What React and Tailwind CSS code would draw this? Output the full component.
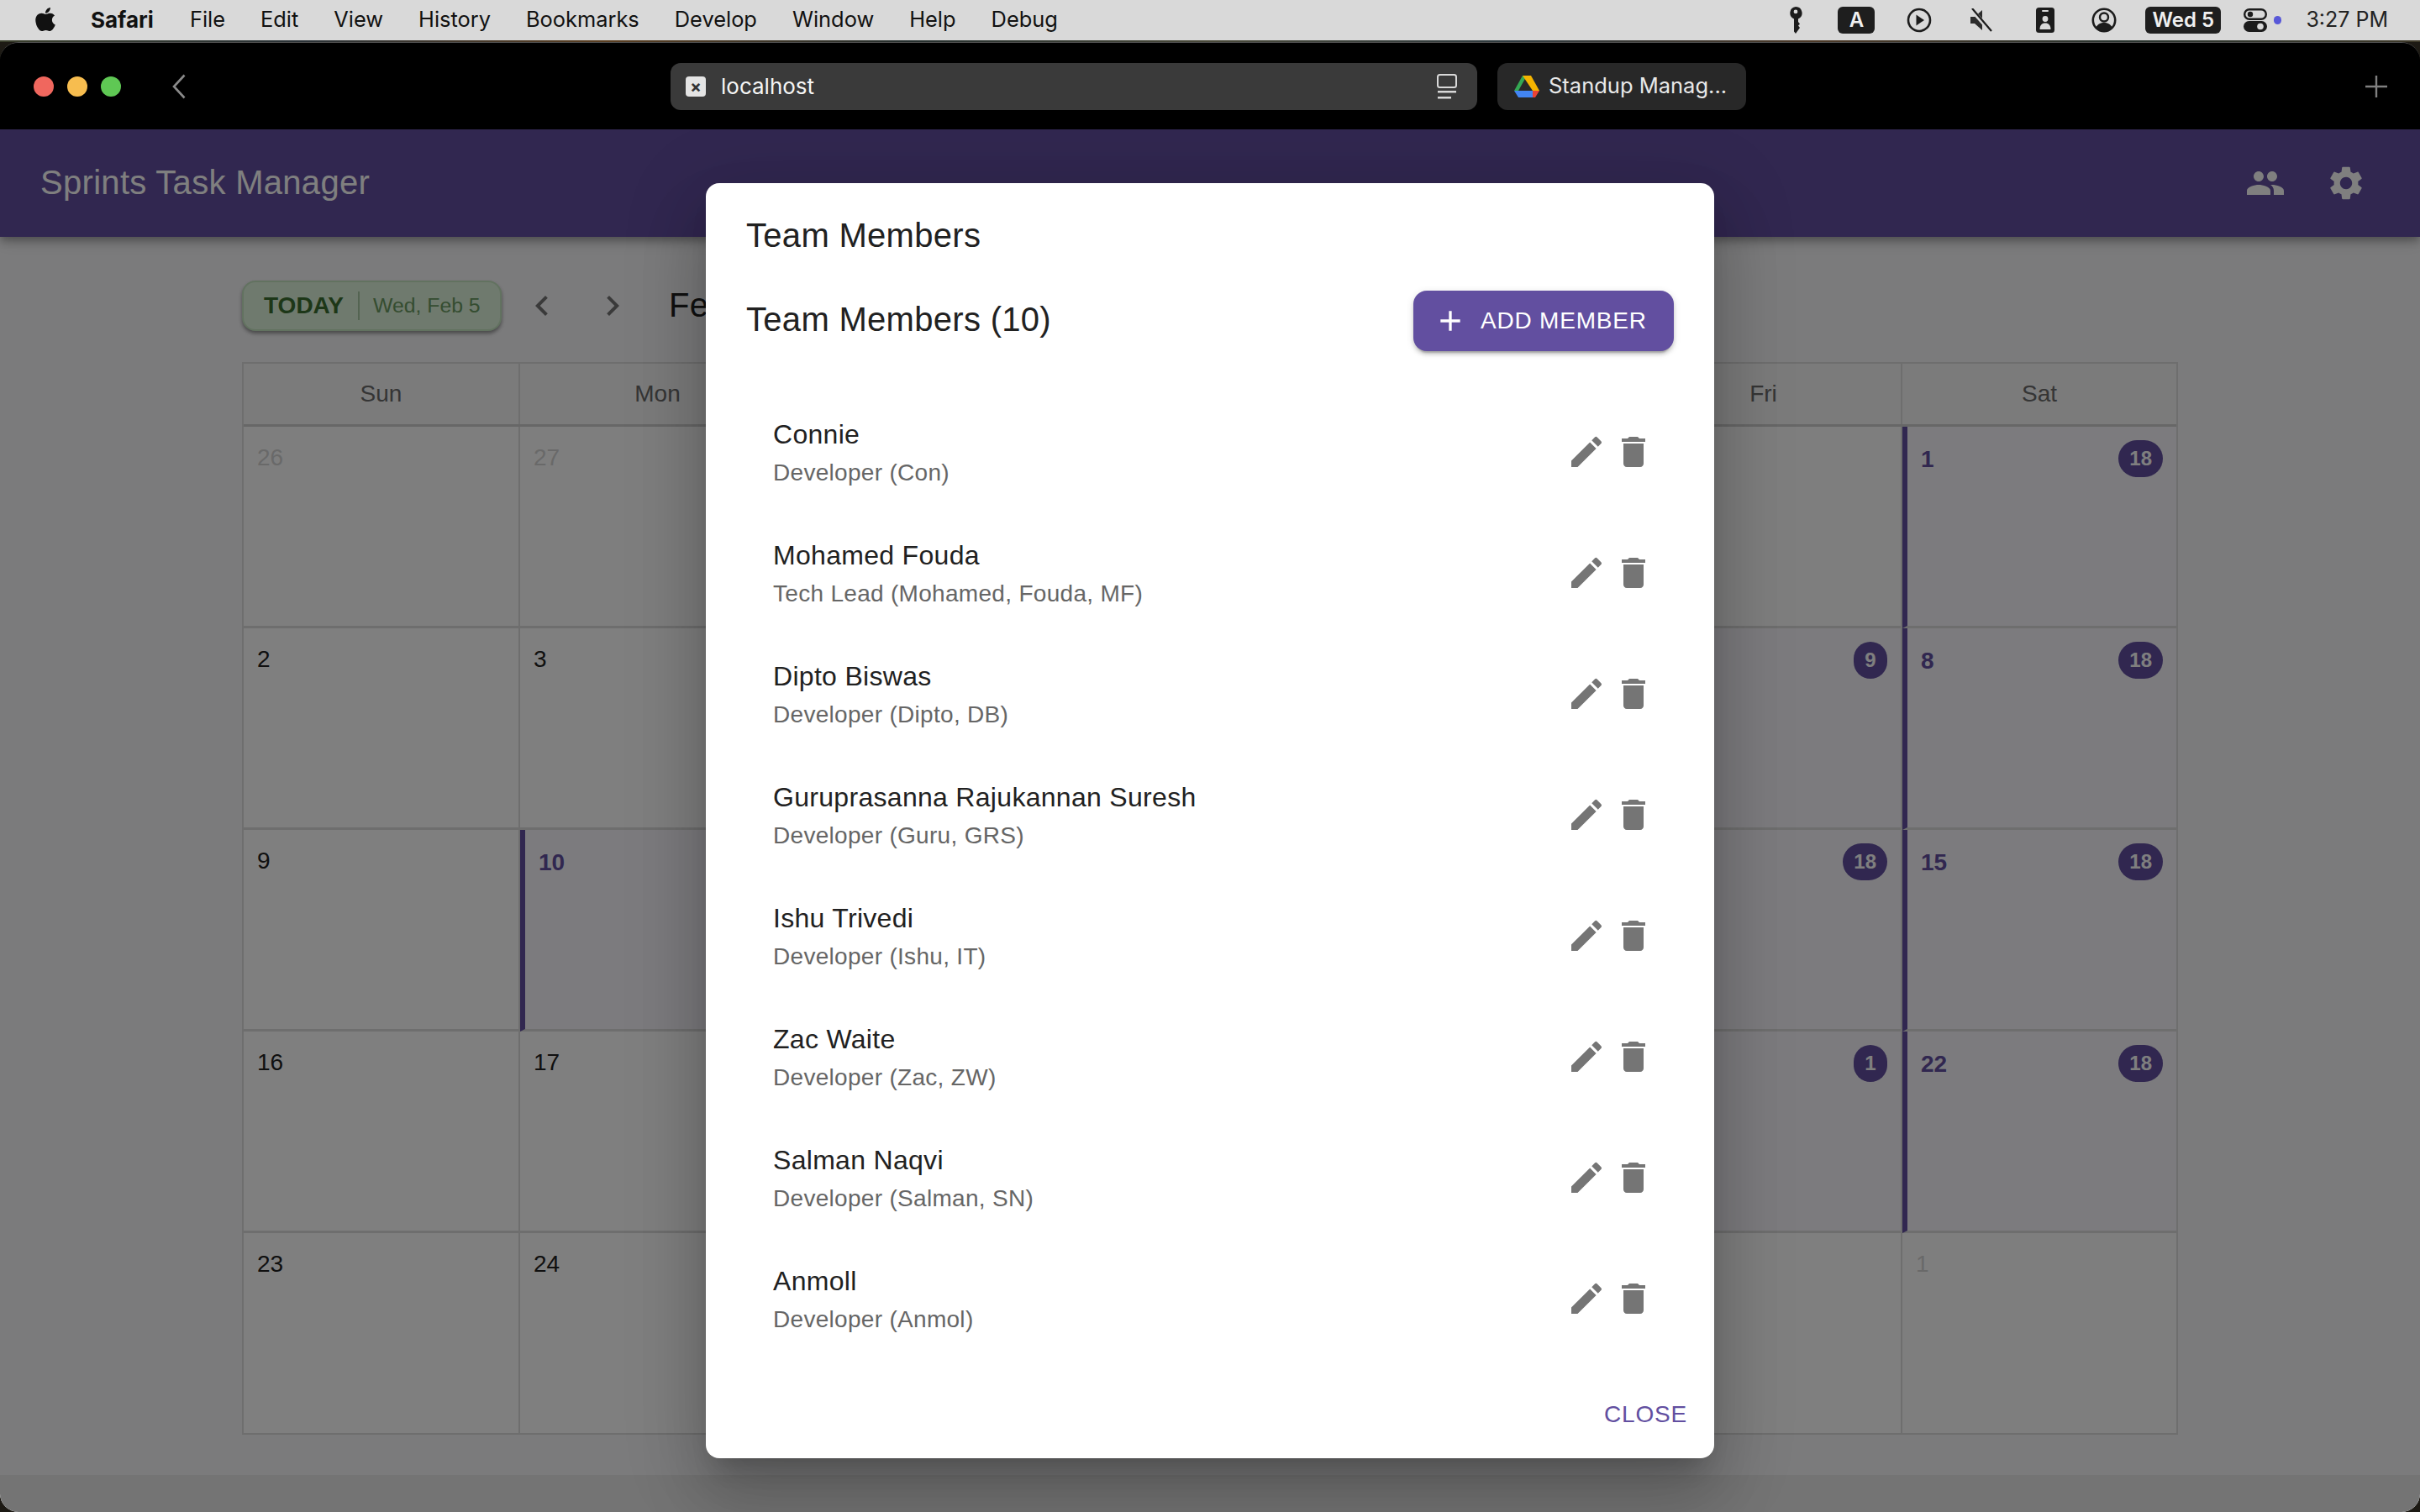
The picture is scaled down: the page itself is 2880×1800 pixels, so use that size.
import React from "react";
import { FaApple } from "react-icons/fa";

const ICON = {
  edit: "M3 17.25V21h3.75L17.81 9.94l-3.75-3.75L3 17.25zM20.71 7.04c.39-.39.39-1.02 0-1.41l-2.34-2.34a.9959.9959 0 0 0-1.41 0l-1.83 1.83 3.75 3.75 1.83-1.83z",
  del: "M6 19c0 1.1.9 2 2 2h8c1.1 0 2-.9 2-2V7H6v12zM19 4h-3.5l-1-1h-5l-1 1H5v2h14V4z",
  add: "M19 13h-6v6h-2v-6H5v-2h6V5h2v6h6v2z",
  people: "M16 11c1.66 0 2.99-1.34 2.99-3S17.66 5 16 5c-1.66 0-3 1.34-3 3s1.34 3 3 3zm-8 0c1.66 0 2.99-1.34 2.99-3S9.66 5 8 5C6.34 5 5 6.34 5 8s1.34 3 3 3zm0 2c-2.33 0-7 1.17-7 3.5V19h14v-2.5c0-2.33-4.67-3.5-7-3.5zm8 0c-.29 0-.62.02-.97.05 1.16.84 1.97 1.97 1.97 3.45V19h6v-2.5c0-2.33-4.67-3.5-7-3.5z",
  gear: "M19.14 12.94c.04-.3.06-.61.06-.94 0-.32-.02-.64-.07-.94l2.03-1.58c.18-.14.23-.41.12-.61l-1.92-3.32c-.12-.22-.37-.29-.59-.22l-2.39.96c-.5-.38-1.03-.7-1.62-.94l-.36-2.54c-.04-.24-.24-.41-.48-.41h-3.84c-.24 0-.43.17-.47.41l-.36 2.54c-.59.24-1.13.57-1.62.94l-2.39-.96c-.22-.08-.47 0-.59.22L2.74 8.87c-.12.21-.08.47.12.61l2.03 1.58c-.05.3-.09.63-.09.94s.02.64.07.94l-2.03 1.58c-.18.14-.23.41-.12.61l1.92 3.32c.12.22.37.29.59.22l2.39-.96c.5.38 1.03.7 1.62.94l.36 2.54c.05.24.24.41.48.41h3.84c.24 0 .44-.17.47-.41l.36-2.54c.59-.24 1.13-.56 1.62-.94l2.39.96c.22.08.47 0 .59-.22l1.92-3.32c.12-.22.07-.47-.12-.61l-2.01-1.58zM12 15.6c-1.98 0-3.6-1.62-3.6-3.6s1.62-3.6 3.6-3.6 3.6 1.62 3.6 3.6-1.62 3.6-3.6 3.6z",
  left: "M15.41 7.41 14 6l-6 6 6 6 1.41-1.41L10.83 12z",
  right: "M10 6 8.59 7.41 13.17 12l-4.58 4.59L10 18l6-6z",
};

function Mui({ d, className }) {
  return (
    <svg viewBox="0 0 24 24" className={className} fill="currentColor">
      <path d={d} />
    </svg>
  );
}

const MENU = ["File", "Edit", "View", "History", "Bookmarks", "Develop", "Window", "Help", "Debug"];

function MenuBar() {
  return (
    <div className="h-[48px] shrink-0 bg-[#d9d9d9] flex items-center font-['Inter',sans-serif] text-[25.4px] text-[#111111]">
      <FaApple className="ml-[39px] w-[30px] h-[32px] mb-[3px] text-[#111111]" />
      <span className="ml-[39px] mb-[2px] text-[26px] font-bold">Safari</span>
      <div className="ml-[43px] mb-[2px] flex gap-[42px]">
        {MENU.map((m) => (
          <span key={m}>{m}</span>
        ))}
      </div>
      <div className="ml-auto flex items-center">
        <svg viewBox="0 0 16 32" className="w-[16px] h-[32px]">
          <path fillRule="evenodd" d="M8 0a7.5 7.5 0 0 1 3 14.4V18l2 2.5-2 2 2 2.500-5 7-2-2.500V14.400A7.500 7.500 0 0 1 8 0zm0 3.500a2.400 2.400 0 1 0 0 4.800 2.400 2.400 0 0 0 0-4.800z" fill="#1c1c1c" />
        </svg>
        <div className="ml-[42px] w-[44px] h-[32px] rounded-[6px] bg-[#1e1e1e] text-[#f0f0f0] text-[24px] font-semibold flex items-center justify-center">A</div>
        <svg viewBox="0 0 30 30" className="ml-[38px] w-[30px] h-[30px]">
          <circle cx="15" cy="15" r="13" fill="none" stroke="#1c1c1c" strokeWidth="2.6" />
          <path d="M11.5 8.5 21 15l-9.5 6.5z" fill="#1c1c1c" />
        </svg>
        <svg viewBox="0 0 28 28" className="ml-[44px] w-[28px] h-[28px]">
          <path d="M2 10h5l9-8v24l-9-8H2z" fill="#2c2c2c" />
          <path d="M3 1l23 26" stroke="#d9d9d9" strokeWidth="5" />
          <path d="M4 0l23 27" stroke="#1c1c1c" strokeWidth="2.2" />
        </svg>
        <svg viewBox="0 0 22 30" className="ml-[52px] w-[22px] h-[30px]">
          <rect width="22" height="30" rx="3.5" fill="#1c1c1c" />
          <rect x="7" y="3" width="8" height="2" rx="1" fill="#d9d9d9" />
          <circle cx="11" cy="13.5" r="3.4" fill="#d9d9d9" />
          <path d="M4.5 26c0-5 2.5-7.5 6.5-7.5s6.5 2.5 6.5 7.5z" fill="#d9d9d9" />
        </svg>
        <svg viewBox="0 0 30 30" className="ml-[44px] w-[30px] h-[30px]">
          <circle cx="15" cy="15" r="13.2" fill="none" stroke="#1c1c1c" strokeWidth="2.6" />
          <circle cx="15" cy="11.5" r="5" fill="none" stroke="#1c1c1c" strokeWidth="2.4" />
          <path d="M5.5 23.5c2-4 5.5-5.5 9.5-5.5s7.500 1.500 9.500 5.500C22 26.500 18.500 28 15 28s-7-1.500-9.500-4.500z" fill="#1c1c1c" />
        </svg>
        <div className="ml-[34px] w-[90px] h-[32px] rounded-[6px] bg-[#1e1e1e] text-[#f0f0f0] text-[24px] font-semibold flex items-center justify-center whitespace-nowrap">Wed 5</div>
        <svg viewBox="0 0 28 28" className="ml-[27px] w-[28px] h-[28px]">
          <rect x="1.200" y="1.200" width="25.600" height="11.600" rx="5.800" fill="none" stroke="#1c1c1c" strokeWidth="2.400" />
          <circle cx="8" cy="7" r="3.200" fill="#1c1c1c" />
          <rect y="15" width="28" height="13" rx="6.500" fill="#1c1c1c" />
          <circle cx="20" cy="21.500" r="3.800" fill="#d9d9d9" />
        </svg>
        <div className="ml-[8px] w-[9px] h-[10px] rounded-full bg-[#5858d8]" />
        <span className="ml-[29px] mr-[38px] text-[25px] whitespace-nowrap text-[#222222]">3:27 PM</span>
      </div>
    </div>
  );
}

function DriveLogo() {
  return (
    <svg viewBox="0 0 30 26" className="w-[30px] h-[26px]">
      <polygon points="15,0 10,0 0,18 5,18" fill="#34a853" />
      <polygon points="10,0 15,0 20,0 30,18 22,18" fill="#f5b400" />
      <polygon points="15,9 10,18 20,18" fill="#282828" />
      <polygon points="0,18 10,18 22,18 22,26 5,26" fill="#4285f4" />
      <polygon points="22,18 30,18 25,26 22,26" fill="#ea4335" />
    </svg>
  );
}

function BrowserBar() {
  return (
    <div className="h-[103px] shrink-0 bg-black flex items-center font-['Inter',sans-serif]">
      <div className="ml-[40px] flex gap-[16px]">
        <div className="w-[24px] h-[24px] rounded-full bg-[#f0675e]" />
        <div className="w-[24px] h-[24px] rounded-full bg-[#f7bd4f]" />
        <div className="w-[24px] h-[24px] rounded-full bg-[#5fc854]" />
      </div>
      <svg viewBox="0 0 18 30" className="ml-[60px] w-[18px] h-[30px]">
        <path d="M15.500 1.500 3 15l12.500 13.500" fill="none" stroke="#8a8a8a" strokeWidth="2.600" />
      </svg>
      <div className="ml-[576px] w-[960px] h-[56px] rounded-[12px] bg-[#3a3a3a] flex items-center pl-[18px] pr-[24px]">
        <div className="w-[24px] h-[24px] rounded-[4px] bg-[#e4e4e4] text-[#333333] text-[20px] leading-[24px] font-bold flex items-center justify-center">×</div>
        <span className="ml-[18px] text-[26px] text-[#f5f5f5]">localhost</span>
        <svg viewBox="0 0 24 30" className="ml-auto w-[24px] h-[30px]">
          <rect x="1" y="1" width="22" height="15" rx="2.500" fill="none" stroke="#d8d8d8" strokeWidth="2" />
          <rect x="1" y="20" width="22" height="2.500" fill="#d8d8d8" />
          <rect x="1" y="27" width="16" height="2.500" fill="#d8d8d8" />
        </svg>
      </div>
      <div className="ml-[24px] w-[296px] h-[56px] rounded-[12px] bg-[#282828] flex items-center pl-[20px]">
        <DriveLogo />
        <span className="ml-[11px] text-[25.5px] text-[#e8e8e8] whitespace-nowrap">Standup Manag...</span>
      </div>
      <svg viewBox="0 0 28 28" className="ml-auto mr-[38px] w-[28px] h-[28px]">
        <path d="M14 1v26M1 14h26" stroke="#808080" strokeWidth="2.400" />
      </svg>
    </div>
  );
}

const TINT = {
  "1": "18", "7": "9", "8": "18", "10": "", "14": "18", "15": "18", "21": "1", "22": "18",
};

// Each day: [date, muted, hidden under the dialog]. Cells under the dialog keep their box but show no number.
const WEEKS = [
  [["26", 1], ["27", 1], ["28", 1, 1], ["29", 1, 1], ["30", 1, 1], ["31", 1, 1], ["1"]],
  [["2"], ["3"], ["4", 0, 1], ["5", 0, 1], ["6", 0, 1], ["7", 0, 1], ["8"]],
  [["9"], ["10"], ["11", 0, 1], ["12", 0, 1], ["13", 0, 1], ["14", 0, 1], ["15"]],
  [["16"], ["17"], ["18", 0, 1], ["19", 0, 1], ["20", 0, 1], ["21", 0, 1], ["22"]],
  [["23"], ["24"], ["25", 0, 1], ["26", 0, 1], ["27", 0, 1], ["28", 0, 1], ["1", 1]],
];

function DayCell({ label, muted, hidden, last, bottom }) {
  const tinted = !muted && label in TINT;
  const badge = tinted ? TINT[label] : "";
  const base = `h-[240px] border-[#dcdcdc] ${last ? "" : "border-r-2"} ${bottom ? "border-b-2" : "border-b-[3px]"}`;
  if (tinted) {
    return (
      <div className={`${base} bg-[#f8f7fc] border-l-[6px] border-l-[#624fa0] pl-[16px] pr-[16px] pt-[16px] flex justify-between items-start`}>
        <span className="mt-[1px] h-[44px] flex items-center text-[28px] font-bold text-[#624fa0]">{hidden ? "" : label}</span>
        {badge && (
          <span className="h-[44px] min-w-[40px] px-[13px] rounded-[22px] bg-[#624fa0] text-white text-[24px] font-bold flex items-center justify-center">{badge}</span>
        )}
      </div>
    );
  }
  return (
    <div className={`${base} ${muted ? "bg-[#fdfdfd]" : "bg-white"} px-[16px] pt-[15px]`}>
      <span className={`text-[28px] leading-[44px] ${muted ? "text-[#d2d2d2]" : "text-[#212121]"}`}>{hidden ? "" : label}</span>
    </div>
  );
}

function Calendar() {
  const days = ["Sun", "Mon", "", "", "", "Fri", "Sat"];
  return (
    <div className="flex-1 px-[288px] pt-[52px]">
      <div className="h-[60px] flex items-center">
        <div className="w-[309px] h-[60px] rounded-[16px] bg-[#def4dc] border-2 border-[#c4e4c0] shadow-[0_3px_4px_rgba(0,0,0,0.4)] flex items-center pl-[24px]">
          <span className="text-[28px] font-bold text-[#3a6e30]">TODAY</span>
          <div className="ml-[17px] w-[2px] h-[34px] bg-[#a8c8a4]" />
          <span className="ml-[16px] text-[24.800px] text-[#6a9a62] whitespace-nowrap">Wed, Feb 5</span>
        </div>
        <Mui d={ICON.left} className="ml-[24px] w-[48px] h-[48px] text-[#757575]" />
        <Mui d={ICON.right} className="ml-[36px] w-[48px] h-[48px] text-[#757575]" />
        <span className="ml-[43px] pb-[3px] text-[40px] tracking-[0.3px] text-[#212121] whitespace-nowrap">February 2025</span>
      </div>
      <div className="mt-[37px] w-[2304px] border-l-2 border-t-2 border-r-2 border-[#dcdcdc]">
        <div className="grid grid-cols-[repeat(6,329px)_1fr] h-[75px] border-b-[3px] border-[#cfcfcf] bg-[#f6f6f6]">
          {days.map((d, i) => (
            <div key={i} className={`flex items-center justify-center text-[28px] text-[#6b6b6b] border-[#dcdcdc] ${i < 6 ? "border-r-2" : ""}`}>{d}</div>
          ))}
        </div>
        {WEEKS.map((w, r) => (
          <div key={r} className="grid grid-cols-[repeat(6,329px)_1fr]">
            {w.map(([label, muted, hidden], i) => (
              <DayCell key={i} label={label} muted={!!muted} hidden={!!hidden} last={i === 6} bottom={r === 4} />
            ))}
          </div>
        ))}
      </div>
    </div>
  );
}

const MEMBERS = [
  ["Connie", "Developer (Con)"],
  ["Mohamed Fouda", "Tech Lead (Mohamed, Fouda, MF)"],
  ["Dipto Biswas", "Developer (Dipto, DB)"],
  ["Guruprasanna Rajukannan Suresh", "Developer (Guru, GRS)"],
  ["Ishu Trivedi", "Developer (Ishu, IT)"],
  ["Zac Waite", "Developer (Zac, ZW)"],
  ["Salman Naqvi", "Developer (Salman, SN)"],
  ["Anmoll", "Developer (Anmol)"],
];

function Modal() {
  return (
    <div className="w-[1200px] h-full bg-white rounded-[16px] flex flex-col shadow-[0_22px_30px_-14px_rgba(0,0,0,0.2),0_48px_76px_6px_rgba(0,0,0,0.14),0_18px_92px_16px_rgba(0,0,0,0.12)]">
      <div className="pt-[30px] px-[48px] h-[96px] shrink-0 text-[40px] leading-[64px] tracking-[0.3px] text-[#212121]">Team Members</div>
      <div className="flex-1 overflow-hidden px-[48px]">
        <div className="h-[72px] mt-[32px] flex items-center justify-between">
          <span className="pb-[4px] text-[40px] tracking-[0.3px] text-[#212121]">Team Members (10)</span>
          <button className="w-[310px] h-[72px] rounded-[16px] bg-[#624fa0] text-white text-[28px] tracking-[0.8px] flex items-center pl-[24px] shadow-[0_6px_2px_-4px_rgba(0,0,0,0.2),0_4px_4px_0_rgba(0,0,0,0.14),0_2px_10px_0_rgba(0,0,0,0.12)]">
            <Mui d={ICON.add} className="w-[40px] h-[40px]" />
            <span className="ml-[16px]">ADD MEMBER</span>
          </button>
        </div>
        <div className="mt-[48px]">
          {MEMBERS.map(([name, sub]) => (
            <div key={name} className="h-[144px] flex items-center pl-[32px] pr-[24px]">
              <div className="flex-1 pt-[2px]">
                <div className="mb-[4px] text-[32px] leading-[44px] text-[#212121] tracking-[0.3px]">{name}</div>
                <div className="text-[28px] leading-[40px] text-[#666666] tracking-[0.3px]">{sub}</div>
              </div>
              <Mui d={ICON.edit} className="w-[48px] h-[48px] text-[#757575]" />
              <Mui d={ICON.del} className="ml-[8px] w-[48px] h-[48px] text-[#757575]" />
            </div>
          ))}
        </div>
      </div>
      <div className="h-[88px] shrink-0 flex items-center justify-end pr-[32px] pb-[16px]">
        <span className="text-[28px] tracking-[0.8px] text-[#624fa0]">CLOSE</span>
      </div>
    </div>
  );
}

export default function App() {
  return (
    <div className="relative w-[2880px] h-[1800px] overflow-hidden bg-[#1d1a14] font-['Liberation_Sans',Arial,sans-serif] flex flex-col">
      <MenuBar />
      <div className="h-[2px] shrink-0 bg-[linear-gradient(90deg,#3a3f2c,#2b3338,#5b3f22,#26302f,#4a4a3a,#2e3a3f,#4d3a28,#2a3530,#3f3a2a)]" />
      <div className="flex-1 min-h-0 rounded-t-[22px] rounded-b-[22px] overflow-hidden flex flex-col border-t border-[#555555] bg-black">
        <BrowserBar />
        <div className="relative flex-1 min-h-0 flex flex-col bg-[#f6f6f8]">
          <header className="relative z-10 h-[128px] shrink-0 bg-[#624fa0] flex items-center pl-[48px] pr-[48px] shadow-[0_4px_8px_-2px_rgba(0,0,0,0.2),0_8px_10px_0_rgba(0,0,0,0.14),0_2px_20px_0_rgba(0,0,0,0.12)]">
            <span className="pb-[2px] text-[40px] tracking-[0.3px] text-white">Sprints Task Manager</span>
            <div className="ml-auto flex items-center gap-[48px] pr-[16px] text-white">
              <Mui d={ICON.people} className="w-[48px] h-[48px]" />
              <Mui d={ICON.gear} className="w-[48px] h-[48px]" />
            </div>
          </header>
          <Calendar />
          <div className="h-[44px] shrink-0 bg-[#e8e8e8]" />
          <div className="absolute inset-0 z-20 bg-black/50 flex items-center justify-center py-[64px]">
            <Modal />
          </div>
        </div>
      </div>
    </div>
  );
}
